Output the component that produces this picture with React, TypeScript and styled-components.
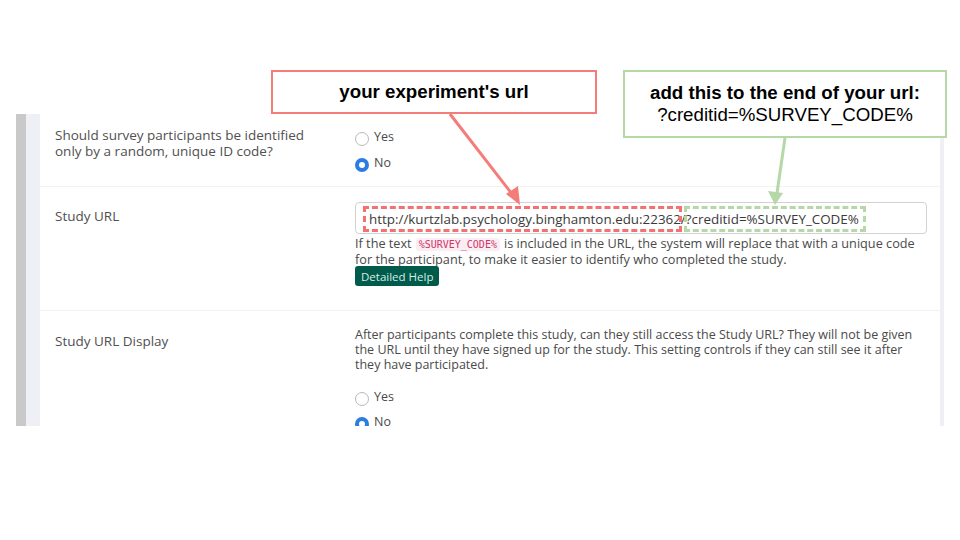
import React from "react";
import styled, { createGlobalStyle } from "styled-components";

const Global = createGlobalStyle`
  html, body { margin: 0; padding: 0; background: #ffffff; }
  body { width: 960px; height: 540px; overflow: hidden; font-family: "Open Sans", "Noto Sans", sans-serif; }
`;

const Slide = styled.div`
  position: relative;
  width: 960px;
  height: 540px;
  padding: 114px 0 0 16px;
  box-sizing: border-box;
  background: #ffffff;
`;

const Panel = styled.div`
  display: flex;
  width: 928px;
  height: 312px;
  overflow: hidden;
`;

const GreyBar = styled.div`
  width: 10px;
  background: #c9c9c9;
  flex: none;
`;

const Strip = styled.div<{ $w: number }>`
  width: ${(p) => p.$w}px;
  background: #eef0f6;
  flex: none;
`;

const Content = styled.div`
  width: 900px;
  flex: none;
  background: #ffffff;
  display: flex;
  flex-direction: column;
`;

const Row = styled.div<{ $h?: number; $pt: number; $last?: boolean }>`
  display: grid;
  grid-template-columns: 300px 1fr;
  padding: ${(p) => p.$pt}px 14px 0 15px;
  height: ${(p) => (p.$h ? `${p.$h}px` : "auto")};
  flex: none;
  box-sizing: border-box;
  border-bottom: ${(p) => (p.$last ? "none" : "1px solid #f1f2f4")};
`;

const Label = styled.div<{ $mt?: number }>`
  font-size: 13.5px;
  line-height: 16px;
  color: #505050;
  margin-top: ${(p) => p.$mt ?? 0}px;
  white-space: nowrap;
`;

const Control = styled.div`
  display: flex;
  flex-direction: column;
`;

const RadioRow = styled.label<{ $mt?: number }>`
  display: flex;
  align-items: center;
  gap: 5px;
  height: 18px;
  margin-top: ${(p) => p.$mt ?? 0}px;
  font-size: 12.5px;
  color: #4a4a4a;
`;

const RadioCircle = styled.span<{ $on?: boolean }>`
  width: 14px;
  height: 14px;
  box-sizing: border-box;
  border-radius: 50%;
  background: #fff;
  border: ${(p) => (p.$on ? "4px solid #2b7de0" : "1px solid #b9b9b9")};
  margin-top: 6px;
  flex: none;
`;

const RadioText = styled.span`
  margin-top: 0px;
`;

const InputBox = styled.div`
  position: relative;
  width: 572px;
  height: 32px;
  box-sizing: border-box;
  border: 1px solid #d2d2d2;
  border-radius: 4px;
  display: flex;
  align-items: center;
  padding: 2px 0 0 13px;
  font-size: 13.4px;
  color: #3a3a3a;
  white-space: nowrap;
`;

const Dashed = styled.span<{ $color: string; $l: number; $w: number }>`
  position: absolute;
  top: 3px;
  left: ${(p) => p.$l}px;
  width: ${(p) => p.$w}px;
  height: 26px;
  box-sizing: border-box;
  border: 3px dashed ${(p) => p.$color};
`;

const Help = styled.div`
  font-size: 12.7px;
  line-height: 15px;
  color: #4a4a4a;
  margin-top: 2px;
  width: 568px;
`;

const Code = styled.code`
  font-family: "DejaVu Sans Mono", monospace;
  font-size: 10px;
  color: #d2336a;
  background: #fbeef2;
  padding: 1px 3px;
  border-radius: 3px;
  margin: 0 4px;
`;

const HelpButton = styled.button`
  align-self: flex-start;
  background: #005b4b;
  color: #d9ebe6;
  border: none;
  border-radius: 3px;
  font-family: "Open Sans", sans-serif;
  font-size: 11.5px;
  height: 20px;
  padding: 0 6px;
  margin-top: -1px;
`;

const Desc = styled.div`
  font-size: 12.5px;
  line-height: 15px;
  color: #4a4a4a;
  width: 570px;
  margin-bottom: 15px;
`;

const Callout = styled.div<{ $color: string; $l: number; $t: number; $w: number; $h: number }>`
  position: absolute;
  left: ${(p) => p.$l}px;
  top: ${(p) => p.$t}px;
  width: ${(p) => p.$w}px;
  height: ${(p) => p.$h}px;
  box-sizing: border-box;
  border: 2px solid ${(p) => p.$color};
  background: #ffffff;
  display: flex;
  flex-direction: column;
  align-items: center;
  justify-content: center;
  font-family: "Liberation Sans", Arial, sans-serif;
  font-size: 18.7px;
  line-height: 22px;
  color: #000;
`;

const Bold = styled.span`
  font-weight: bold;
`;

const Arrows = styled.svg`
  position: absolute;
  left: 0;
  top: 0;
  pointer-events: none;
`;

export default function App() {
  return (
    <Slide>
      <Global />
      <Panel>
        <GreyBar />
        <Strip $w={14} />
        <Content>
          <Row $h={73} $pt={13}>
            <Label>
              Should survey participants be identified
              <br />
              only by a random, unique ID code?
            </Label>
            <Control>
              <RadioRow $mt={0}>
                <RadioCircle />
                <RadioText>Yes</RadioText>
              </RadioRow>
              <RadioRow $mt={8}>
                <RadioCircle $on />
                <RadioText>No</RadioText>
              </RadioRow>
            </Control>
          </Row>
          <Row $h={124} $pt={15}>
            <Label $mt={6}>Study URL</Label>
            <Control>
              <InputBox>
                http://kurtzlab.psychology.binghamton.edu:22362/?creditid=%SURVEY_CODE%
                <Dashed $color="#f47171" $l={7} $w={319} />
                <Dashed $color="#b6d7a8" $l={328} $w={182} />
              </InputBox>
              <Help>
                If the text<Code>%SURVEY_CODE%</Code>is included in the URL, the system will replace that with a unique code
                for the participant, to make it easier to identify who completed the study.
              </Help>
              <HelpButton>Detailed Help</HelpButton>
            </Control>
          </Row>
          <Row $pt={16} $last>
            <Label $mt={6}>Study URL Display</Label>
            <Control>
              <Desc>
                After participants complete this study, can they still access the Study URL? They will not be given
                the URL until they have signed up for the study. This setting controls if they can still see it after
                they have participated.
              </Desc>
              <RadioRow>
                <RadioCircle />
                <RadioText>Yes</RadioText>
              </RadioRow>
              <RadioRow $mt={7}>
                <RadioCircle $on />
                <RadioText>No</RadioText>
              </RadioRow>
            </Control>
          </Row>
        </Content>
        <Strip $w={4} />
      </Panel>

      <Callout $color="#f47c79" $l={271} $t={70} $w={326} $h={44}>
        <Bold>your experiment's url</Bold>
      </Callout>
      <Callout $color="#b6d7a8" $l={623} $t={70} $w={324} $h={68}>
        <Bold>add this to the end of your url:</Bold>
        <span>?creditid=%SURVEY_CODE%</span>
      </Callout>

      <Arrows width="960" height="540" viewBox="0 0 960 540">
        <line x1="450" y1="114" x2="512" y2="194" stroke="#f47c79" strokeWidth="3" />
        <polygon points="520,205 506,194 518,186" fill="#f47c79" />
        <line x1="785" y1="138" x2="777" y2="193" stroke="#b6d7a8" strokeWidth="3" />
        <polygon points="775,205 768,191 783,193" fill="#b6d7a8" />
      </Arrows>
    </Slide>
  );
}
